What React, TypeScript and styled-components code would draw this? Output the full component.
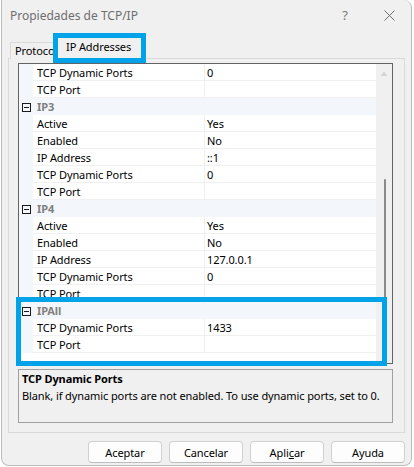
import React from "react";
import styled, { createGlobalStyle } from "styled-components";

const GlobalStyle = createGlobalStyle`
  html, body {
    margin: 0;
    padding: 0;
    background: #ffffff;
  }
  body {
    font-family: "Segoe UI", "Noto Sans", sans-serif;
    font-size: 11px;
    letter-spacing: -0.1px;
    color: #000;
  }
`;

const HIGHLIGHT = "#00a2e8";

const Window = styled.div`
  box-sizing: border-box;
  width: 411px;
  height: 466px;
  margin-left: 1px;
  background: #f0f0f0;
  border: 1px solid #bcbcbc;
  border-top: none;
  border-radius: 0 8px 8px 8px;
  display: flex;
  flex-direction: column;
  padding: 0 6px 0 6px;
`;

const TitleBar = styled.div`
  height: 30px;
  display: flex;
  align-items: center;
  margin: 0 -6px 0 -6px;
  padding-left: 8px;
`;

const Title = styled.div`
  flex: 1;
  font-size: 12px;
  letter-spacing: 0;
  color: #6e6e6e;
`;

const TitleButton = styled.div`
  width: 44px;
  height: 30px;
  display: flex;
  align-items: center;
  justify-content: center;
  color: #7a7a7a;
  font-size: 13px;
`;

const TabStrip = styled.div`
  display: flex;
  align-items: flex-end;
  margin-top: 6px;
  margin-bottom: -1px;
  padding-left: 2px;
`;

const Tab = styled.div<{ $active?: boolean }>`
  position: relative;
  box-sizing: border-box;
  border: 1px solid #d9d9d9;
  border-bottom: none;
  background: #f0f0f0;
  white-space: nowrap;
  display: flex;
  align-items: center;
  padding-bottom: ${(p) => (p.$active ? "4px" : "2px")};
  height: ${(p) => (p.$active ? "23px" : "17px")};
  width: ${(p) => (p.$active ? "87px" : "48px")};
  padding-left: ${(p) => (p.$active ? "9px" : "4px")};
  margin-right: ${(p) => (p.$active ? "0" : "-2px")};
  z-index: ${(p) => (p.$active ? 2 : 1)};
`;

const TabMark = styled.div`
  position: absolute;
  top: -4px;
  left: -4px;
  right: -4px;
  bottom: -4px;
  border: 5px solid ${HIGHLIGHT};
  pointer-events: none;
`;

const Panel = styled.div`
  box-sizing: border-box;
  width: 397px;
  height: 375px;
  border: 1px solid #d9d9d9;
  background: #f0f0f0;
  padding: 4px 11px 9px 9px;
  display: flex;
  flex-direction: column;
  gap: 5px;
`;

const Grid = styled.div`
  position: relative;
  box-sizing: border-box;
  height: 301px;
  border: 1px solid #646464;
  background: #ffffff;
  display: flex;
`;

const Rows = styled.div`
  flex: 1;
  display: flex;
  flex-direction: column;
`;

const Row = styled.div`
  display: grid;
  grid-template-columns: 14px 172px 1fr;
  height: 17px;
`;

const Margin = styled.div`
  background: #f3f6fa;
  display: flex;
  align-items: center;
  justify-content: center;
`;

const Cell = styled.div<{ $value?: boolean }>`
  box-sizing: border-box;
  height: 17px;
  line-height: 18px;
  border-bottom: 1px solid #f0f0f0;
  border-right: ${(p) => (p.$value ? "none" : "1px solid #f0f0f0")};
  padding-left: ${(p) => (p.$value ? "2px" : "4px")};
  white-space: nowrap;
`;

const Category = styled.div`
  display: grid;
  grid-template-columns: 14px 1fr;
  height: 17px;
  background: #f3f6fa;
`;

const CategoryLabel = styled.div`
  line-height: 18px;
  padding-left: 4px;
  font-weight: 700;
  color: #808080;
`;

const Expander = styled.div`
  box-sizing: border-box;
  width: 9px;
  height: 9px;
  margin-left: 1px;
  border: 1px solid #1a1a1a;
  display: flex;
  align-items: center;
  justify-content: center;
  &::after {
    content: "";
    width: 5px;
    height: 1px;
    background: #1a1a1a;
  }
`;

const ScrollBar = styled.div`
  width: 16px;
  background: #f0f0f0;
  display: flex;
  flex-direction: column;
  align-items: center;
`;

const Thumb = styled.div`
  width: 2px;
  margin-left: 1px;
  background: #8a8a8a;
  border-radius: 1px;
`;

const GroupMark = styled.div`
  position: absolute;
  left: -3px;
  top: 233px;
  width: 371px;
  height: 69px;
  box-sizing: border-box;
  border: 5px solid ${HIGHLIGHT};
  pointer-events: none;
`;

const Description = styled.div`
  box-sizing: border-box;
  height: 54px;
  border: 1px solid #a0a0a0;
  padding: 0 3px;
  line-height: 17px;
  white-space: nowrap;
`;

const DescTitle = styled.div`
  font-weight: 700;
`;

const Buttons = styled.div`
  display: flex;
  justify-content: flex-end;
  gap: 7px;
  margin-top: 8px;
`;

const Button = styled.div`
  box-sizing: border-box;
  width: 74px;
  height: 22px;
  border: 1px solid #d0d0d0;
  border-bottom-color: #bdbdbd;
  border-radius: 4px;
  background: #fdfdfd;
  display: flex;
  align-items: center;
  justify-content: center;
  font-size: 11px;
`;

type Item =
  | { kind: "cat"; name: string }
  | { kind: "prop"; label: string; value?: string };

const items: Item[] = [
  { kind: "prop", label: "TCP Dynamic Ports", value: "0" },
  { kind: "prop", label: "TCP Port" },
  { kind: "cat", name: "IP3" },
  { kind: "prop", label: "Active", value: "Yes" },
  { kind: "prop", label: "Enabled", value: "No" },
  { kind: "prop", label: "IP Address", value: "::1" },
  { kind: "prop", label: "TCP Dynamic Ports", value: "0" },
  { kind: "prop", label: "TCP Port" },
  { kind: "cat", name: "IP4" },
  { kind: "prop", label: "Active", value: "Yes" },
  { kind: "prop", label: "Enabled", value: "No" },
  { kind: "prop", label: "IP Address", value: "127.0.0.1" },
  { kind: "prop", label: "TCP Dynamic Ports", value: "0" },
  { kind: "prop", label: "TCP Port" },
  { kind: "cat", name: "IPAll" },
  { kind: "prop", label: "TCP Dynamic Ports", value: "1433" },
  { kind: "prop", label: "TCP Port" },
];

// thumb position inside the scroll track (px from track top)
const thumbTop = 115;
const thumbHeight = 170;

export default function App() {
  return (
    <>
      <GlobalStyle />
      <Window>
        <TitleBar>
          <Title>Propiedades de TCP/IP</Title>
          <TitleButton>?</TitleButton>
          <TitleButton>
            <svg width="11" height="11" viewBox="0 0 11 11">
              <path d="M0.5 0.5L10.5 10.5M10.5 0.5L0.5 10.5" stroke="#6e6e6e" strokeWidth="1" />
            </svg>
          </TitleButton>
        </TitleBar>

        <TabStrip>
          <Tab>Protocolo</Tab>
          <Tab $active>
            IP Addresses
            <TabMark />
          </Tab>
        </TabStrip>

        <Panel>
          <Grid>
            <Rows>
              {items.map((it, i) =>
                it.kind === "cat" ? (
                  <Category key={i}>
                    <Margin>
                      <Expander />
                    </Margin>
                    <CategoryLabel>{it.name}</CategoryLabel>
                  </Category>
                ) : (
                  <Row key={i}>
                    <Margin />
                    <Cell>{it.label}</Cell>
                    <Cell $value>{it.value}</Cell>
                  </Row>
                )
              )}
            </Rows>
            <ScrollBar>
              <svg width="8" height="18" viewBox="0 0 8 18">
                <path d="M0.5 12L4 7.5L7.5 12Z" fill="#d4d4d4" />
              </svg>
              <Thumb style={{ marginTop: thumbTop - 18, height: thumbHeight }} />
            </ScrollBar>
            <GroupMark />
          </Grid>

          <Description>
            <DescTitle>TCP Dynamic Ports</DescTitle>
            <div>Blank, if dynamic ports are not enabled. To use dynamic ports, set to 0.</div>
          </Description>
        </Panel>

        <Buttons>
          <Button>Aceptar</Button>
          <Button>Cancelar</Button>
          <Button>
            <span>
              Apli<u>c</u>ar
            </span>
          </Button>
          <Button>Ayuda</Button>
        </Buttons>
      </Window>
    </>
  );
}
